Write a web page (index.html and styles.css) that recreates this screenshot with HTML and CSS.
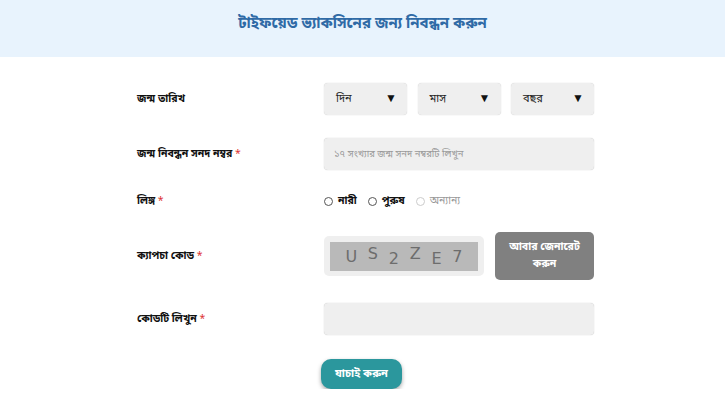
FILE: index.html
```html
<!DOCTYPE html>
<html lang="bn">
<head>
<meta charset="utf-8">
<link rel="stylesheet" href="styles.css">
</head>
<body>
<header class="top">
  <h1 class="title">টাইফয়েড ভ্যাকসিনের জন্য নিবন্ধন করুন</h1>
</header>
<main class="form">
  <div class="row r1">
    <div class="label">জন্ম তারিখ</div>
    <div class="ctrl selects">
      <div class="sel"><span>দিন</span><span class="arr">▼</span></div>
      <div class="sel"><span>মাস</span><span class="arr">▼</span></div>
      <div class="sel"><span>বছর</span><span class="arr">▼</span></div>
    </div>
  </div>
  <div class="row">
    <div class="label">জন্ম নিবন্ধন সনদ নম্বর <span class="req">*</span></div>
    <div class="ctrl"><div class="input ph">১৭ সংখ্যার জন্ম সনদ নম্বরটি লিখুন</div></div>
  </div>
  <div class="row r3">
    <div class="label">লিঙ্গ <span class="req">*</span></div>
    <div class="ctrl radios">
      <span class="radio"><span class="dot"></span>নারী</span>
      <span class="radio"><span class="dot"></span>পুরুষ</span>
      <span class="radio dis"><span class="dot"></span>অন্যান্য</span>
    </div>
  </div>
  <div class="row r4">
    <div class="label">ক্যাপচা কোড <span class="req">*</span></div>
    <div class="ctrl captcha-row">
      <div class="captcha"><div class="cimg"><span class="c1">U</span><span class="c2">S</span><span class="c3">2</span><span class="c4">Z</span><span class="c5">E</span><span class="c6">7</span></div></div>
      <div class="regen">আবার জেনারেট<br>করুন</div>
    </div>
  </div>
  <div class="row">
    <div class="label">কোডটি লিখুন <span class="req">*</span></div>
    <div class="ctrl"><div class="input"></div></div>
  </div>
  <div class="submit-wrap"><div class="submit">যাচাই করুন</div></div>
</main>
</body>
</html>
```
FILE: styles.css
```css
* { box-sizing: border-box; }
body {
  margin: 0;
  background: #fff;
  font-family: "Noto Sans Bengali", "Noto Serif Bengali", "Lohit Bengali", "Noto Sans", sans-serif;
  color: #111;
}
.top {
  height: 57px;
  background: #e8f3fd;
  display: flex;
  align-items: center;
  justify-content: center;
}
.title {
  margin: 0;
  margin-top: -10px;
  font-size: 15px;
  font-weight: 700;
  color: #2f6aa6;
}
.form {
  margin-left: 137px;
  width: 457px;
  padding-top: 26px;
  display: flex;
  flex-direction: column;
  gap: 23px;
}
.row {
  display: flex;
  align-items: center;
  height: 32px;
}
.r3 { height: 16px; }
.r4 { height: 48px; }
.label {
  width: 187px;
  font-size: 10.5px;
  font-weight: 700;
  color: #111;
}
.req { color: #d33; font-weight: 400; }
.ctrl { width: 270px; }
.selects { display: flex; justify-content: space-between; }
.sel {
  width: 83px;
  height: 32px;
  background: #efefef;
  border-radius: 4px;
  box-shadow: 0 0 1px rgba(0,0,0,0.25);
  display: flex;
  align-items: center;
  justify-content: space-between;
  padding: 0 10px 0 12px;
  font-size: 11px;
  color: #222;
}
.arr { font-size: 12px; color: #111; }
.input {
  height: 32px;
  background: #efefef;
  border-radius: 4px;
  box-shadow: 0 0 1px rgba(0,0,0,0.3);
  display: flex;
  align-items: center;
  padding: 0 10px;
  font-size: 9.5px;
}
.ph { color: #999; }
.radios { display: flex; align-items: center; gap: 11px; font-size: 10.5px; }
.radio { display: flex; align-items: center; gap: 5px; font-weight: 700; color: #111; }
.dot {
  width: 9px; height: 9px;
  border: 1px solid #555;
  border-radius: 50%;
  background: #fff;
}
.radio.dis { color: #999; font-weight: 400; }
.radio.dis .dot { border-color: #ccc; }
.captcha-row { display: flex; align-items: center; justify-content: space-between; }
.captcha {
  width: 160px;
  height: 40px;
  background: #efefef;
  border-radius: 5px;
  padding: 6px;
}
.cimg {
  height: 29px;
  background: #b9b9b9;
  display: flex;
  align-items: center;
  justify-content: space-around;
  padding: 0 10px;
  font-family: "DejaVu Sans", sans-serif;
  font-size: 16px;
  color: #6d6d6d;
}
.c2, .c4 { position: relative; top: -3px; }
.c3, .c5 { position: relative; top: 2px; }
.regen {
  width: 99px;
  height: 48px;
  background: #808080;
  border-radius: 5px;
  color: #fff;
  font-size: 10.5px;
  font-weight: 700;
  text-align: center;
  display: flex;
  align-items: center;
  justify-content: center;
  line-height: 1.6;
}
.submit-wrap { padding-left: 184px; margin-top: 1px; }
.submit {
  width: 81px;
  height: 30px;
  background: #2b979d;
  border-radius: 10px;
  box-shadow: 0 2px 4px rgba(0,0,0,0.35);
  color: #fff;
  font-size: 11px;
  font-weight: 700;
  display: flex;
  align-items: center;
  justify-content: center;
}
```
